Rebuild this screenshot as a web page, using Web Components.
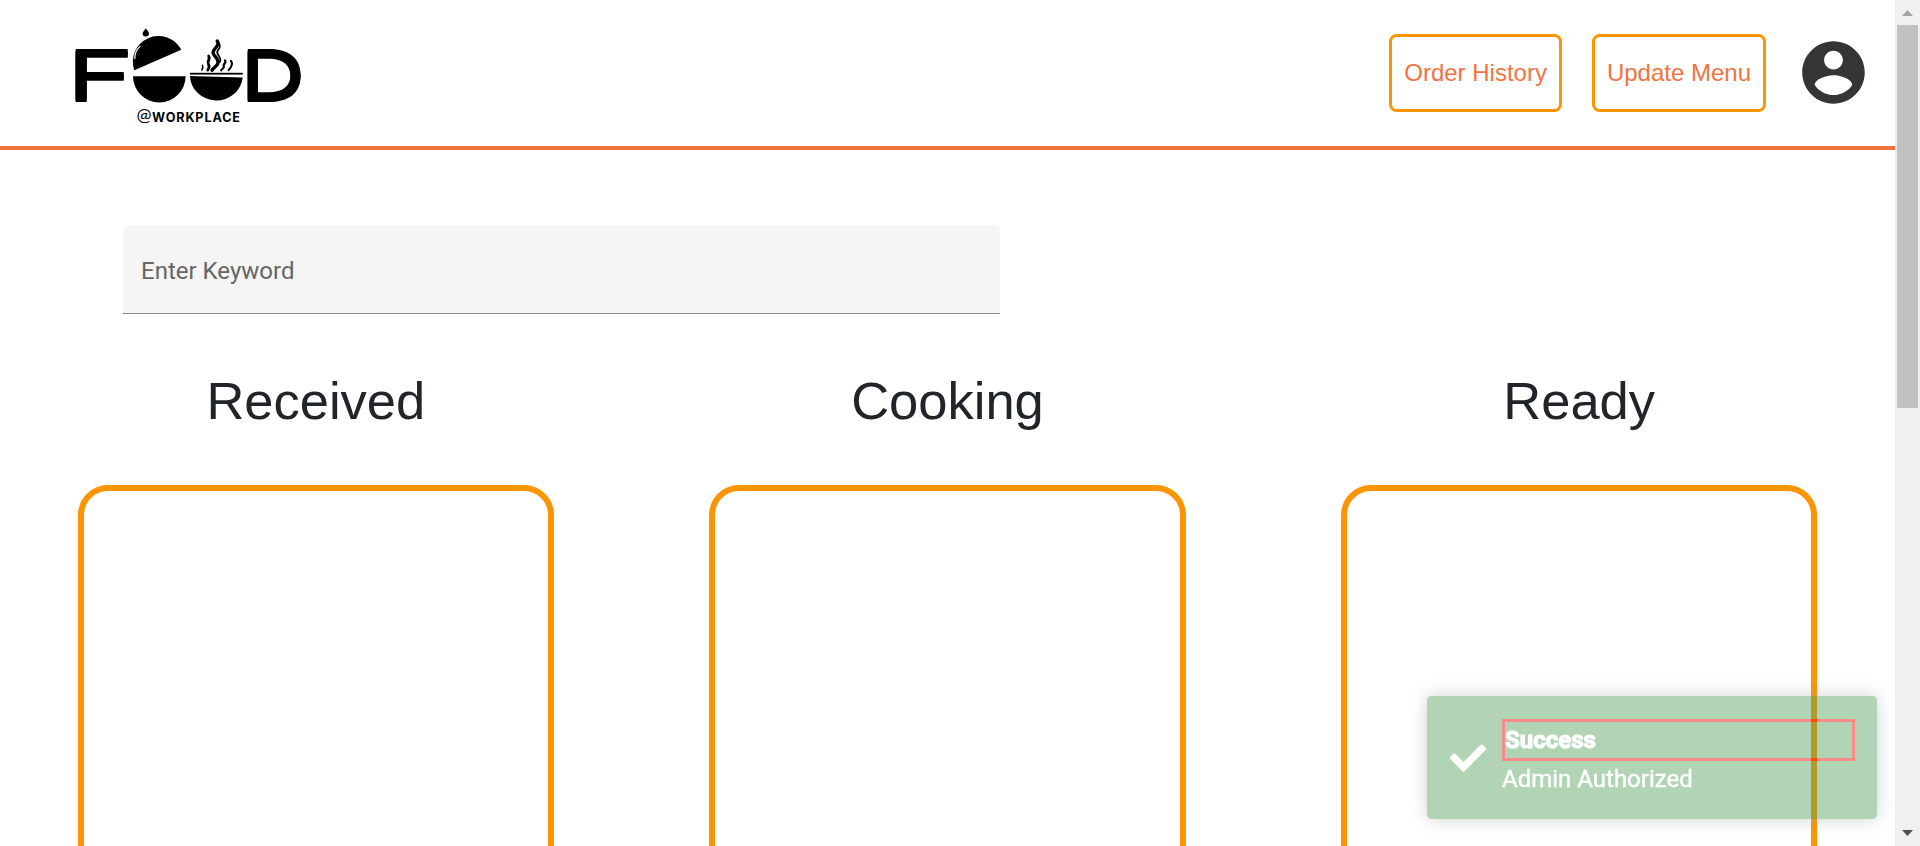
<!DOCTYPE html>
<html lang="en">
<head>
<meta charset="utf-8">
<title>Food @Workplace</title>
<style>
  html, body { margin: 0; height: 100%; overflow: hidden; background: #fff; }
  body { font-family: "Liberation Sans", Arial, sans-serif; font-size: 24px; line-height: 1.5; color: #212529; }
</style>
</head>
<body>
<food-app></food-app>
<script>
const define = (name, html) => customElements.define(name, class extends HTMLElement {
  constructor() {
    super();
    const t = document.createElement('template');
    t.innerHTML = html;
    this.attachShadow({ mode: 'open' }).append(t.content.cloneNode(true));
  }
});

define('food-logo', `
<style>:host{display:block;width:260px;height:110px} svg{display:block;overflow:visible}</style>
<svg width="260" height="110" viewBox="50 20 260 110">
  <filter id="thick" x="-10%" y="-10%" width="120%" height="120%">
    <feOffset in="SourceGraphic" dy="-1.5" result="a"/>
    <feOffset in="SourceGraphic" dy="-3" result="b"/>
    <feMerge><feMergeNode in="SourceGraphic"/><feMergeNode in="a"/><feMergeNode in="b"/></feMerge>
  </filter>
  <text filter="url(#thick)" transform="translate(75 101.6) scale(1.71 1)" x="-5.7" y="0" font-family="Inter, sans-serif" font-weight="400" font-size="69.2">F</text>
  <text filter="url(#thick)" transform="translate(247.5 101.6) scale(1.3 1)" x="-5.4" y="0" font-family="Inter, sans-serif" font-weight="500" font-size="69.2">D</text>
  <path d="M145.8 28.3C147 30.4 149 31.8 149 33.6A3.2 3 0 0 1 142.6 33.6C142.6 31.8 144.8 30.4 145.8 28.3Z"/>
  <path d="M134.3 70.3A25.7 25.7 0 0 1 181.3 49.8Z"/>
  <path d="M134.8 58.5C134.8 53.5 136.6 49.5 140 46.4" fill="none" stroke="#fff" stroke-width="1.2" stroke-linecap="round"/>
  <path d="M133 76.2H185.6A26.3 26.3 0 0 1 133 76.2Z"/>
  <rect x="190" y="72.8" width="52.8" height="1.8"/>
  <path d="M190 76L242.7 77.5A26.4 25 0 0 1 190 76Z"/>
  <g fill="none" stroke="#000" stroke-linecap="round">
    <path stroke-width="3.4" d="M217.2 41C221.5 45.8 211.5 48.8 213.3 53.5C214.6 57 219.8 59.8 217.6 64C216.3 66.5 213 68 212 70.3"/>
    <path stroke-width="1.8" d="M217 41.2C221.8 45.8 219.5 48.2 217.5 51C215.4 54.5 222.6 57.5 219.8 62"/>
    <path stroke-width="2.8" d="M208.6 56C211 59 206.5 60.8 208.4 64C210 66.6 209.2 68 207.8 70"/>
    <path stroke-width="2.2" d="M225 60.4C227 62.6 222.8 63.6 223.8 66.4C224.2 68 222 68.8 221.2 70.3"/>
    <path stroke-width="1.5" d="M202.4 65.4C203.4 67.4 202.6 68.8 201.8 70"/>
    <path stroke-width="2" d="M231 60.8C233 63.5 231.6 66.8 228.6 70.2"/>
  </g>
  <text x="136.5" y="121.3" font-family="Lato, sans-serif" font-size="17" textLength="15" lengthAdjust="spacingAndGlyphs">@</text>
  <text x="152" y="121.5" font-family="Inter, sans-serif" font-weight="700" font-size="12.6" textLength="88" lengthAdjust="spacing">WORKPLACE</text>
</svg>`);

define('nav-button', `
<style>
:host{display:block}
button{display:block;box-sizing:border-box;height:78px;padding:0 12px;border:3px solid #fb9504;border-radius:7.5px;background:#fff;color:#f3733f;font:inherit;line-height:36px;white-space:nowrap}
</style><button><slot></slot></button>`);

define('account-icon', `
<style>:host{display:block;width:75px;height:75px} svg{display:block}</style>
<svg width="75" height="75" viewBox="0 0 24 24" fill="#343633"><path d="M12 2C6.48 2 2 6.48 2 12s4.48 10 10 10 10-4.48 10-10S17.52 2 12 2zm0 3c1.66 0 3 1.34 3 3s-1.34 3-3 3-3-1.34-3-3 1.34-3 3-3zm0 14.2c-2.5 0-4.71-1.28-6-3.22.03-1.99 4-3.08 6-3.08 1.99 0 5.97 1.09 6 3.08-1.29 1.94-3.5 3.22-6 3.22z"/></svg>`);

define('top-bar', `
<style>
:host{display:flex;box-sizing:border-box;height:150px;padding:0 24px 0 50px;border-bottom:4px solid #f3733f;align-items:center;justify-content:space-between}
food-logo{margin-top:4px}
nav{display:flex;align-items:center}
nav-button+nav-button{margin-left:30px}
account-icon{margin:0 0 2px 30px}
</style>
<food-logo></food-logo>
<nav><nav-button>Order History</nav-button><nav-button>Update Menu</nav-button><account-icon></account-icon></nav>`);

define('search-field', `
<style>
:host{display:flex;align-items:center;box-sizing:border-box;width:877px;height:89px;margin:75px 0 0 123px;padding:4px 18px 0;background:#f5f5f5;border-bottom:1px solid #8a8a8a;border-radius:6px 6px 0 0;font-family:Roboto,sans-serif;color:#666}
</style><span><slot></slot></span>`);

define('order-column', `
<style>
:host{display:flex;flex-direction:column;align-items:center}
h1{margin:0;font-weight:400;font-size:52.5px;line-height:63px}
.card{box-sizing:border-box;width:476.3px;height:600px;margin-top:53px;border:6px solid #fb9504;border-radius:30px}
</style><h1><slot></slot></h1><div class="card"></div>`);

define('order-board', `
<style>:host{display:grid;grid-template-columns:repeat(3,1fr);margin-top:55px}</style>
<order-column>Received</order-column><order-column>Cooking</order-column><order-column>Ready</order-column>`);

define('toast-message', `
<style>
:host{position:absolute;right:43px;bottom:27px;display:flex;align-items:center;box-sizing:border-box;width:450px;height:123px;padding:0 22px 0 22.5px;gap:16.5px;background:#55a45a;border-radius:4.5px;box-shadow:0 0 18px #999;opacity:.45;color:#fff;font-family:Roboto,sans-serif}
svg{flex:none;display:block}
.body{flex:1}
.title{border:3px solid red;font-weight:700;line-height:36px;-webkit-text-stroke:1.1px #fff}
.text{line-height:36px;-webkit-text-stroke:.4px #fff}
</style>
<svg width="36" height="36" viewBox="0 0 512 512" fill="#fff"><path d="M173.898 439.404l-166.4-166.4c-9.997-9.997-9.997-26.206 0-36.204l36.203-36.204c9.997-9.998 26.207-9.998 36.204 0L192 312.69 432.095 72.596c9.997-9.997 26.207-9.997 36.204 0l36.203 36.204c9.997 9.997 9.997 26.206 0 36.204l-294.4 294.401c-9.998 9.997-26.207 9.997-36.204-.001z"/></svg>
<div class="body"><div class="title"><slot name="title"></slot></div><div class="text"><slot></slot></div></div>`);

define('scroll-track', `
<style>
:host{display:flex;flex-direction:column;align-items:center;width:25px;height:846px;background:#f0f0f0}
svg{display:block;flex:none}
.thumb{width:21px;height:383px;background:#c1c1c1}
.space{flex:1}
</style>
<svg width="25" height="25"><path d="M7 16L12.5 10L18 16Z" fill="#a3a3a3"/></svg>
<div class="thumb"></div><div class="space"></div>
<svg width="25" height="25"><path d="M7 9L12.5 15L18 9Z" fill="#505050"/></svg>`);

define('food-app', `
<style>
:host{position:relative;display:grid;grid-template-columns:1fr 25px;height:846px;overflow:hidden}
main{height:846px;overflow:hidden;min-width:0}
</style>
<main><top-bar></top-bar><search-field>Enter Keyword</search-field><order-board></order-board></main>
<scroll-track></scroll-track>
<toast-message><span slot="title">Success</span>Admin Authorized</toast-message>`);
</script>
</body>
</html>
